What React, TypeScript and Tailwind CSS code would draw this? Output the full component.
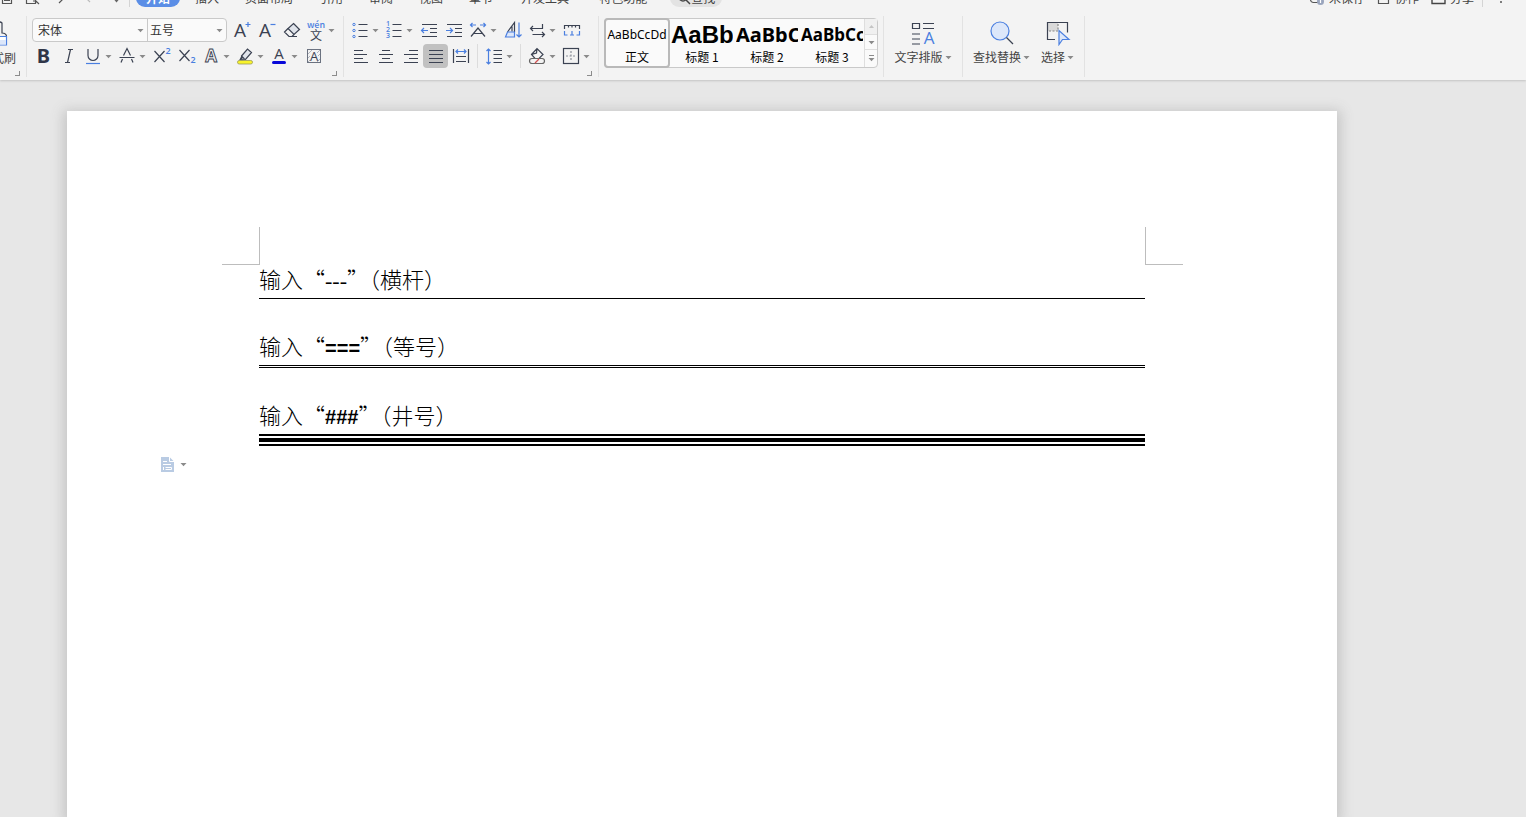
import type { ReactNode } from 'react';
import clsx from 'clsx';
import { Italic } from 'lucide-react';

const DARK = '#3b4252';
const BLUE = '#4a7fe0';

function Caret() {
  return (
    <svg viewBox="0 0 7 5" className="w-[7px] h-[5px] shrink-0 fill-[#8a8a8a]">
      <path d="M0.500 1h6L3.500 4.300z" />
    </svg>
  );
}

function Icon({ children }: { children: ReactNode }) {
  return (
    <svg
      viewBox="0 0 18 18"
      className="w-[18px] h-[18px] shrink-0 overflow-visible"
      fill="none"
      stroke={DARK}
      strokeWidth="1.2"
    >
      {children}
    </svg>
  );
}

// Letter used inside an icon
function Glyph({ x, y, size, color = DARK, bold = false, children }: {
  x: number;
  y: number;
  size: number;
  color?: string;
  bold?: boolean;
  children: string;
}) {
  return (
    <text
      x={x}
      y={y}
      fontSize={size}
      fill={color}
      stroke="none"
      textAnchor="middle"
      className={clsx("font-['Open_Sans',sans-serif]", bold ? 'font-semibold' : 'font-normal')}
    >
      {children}
    </text>
  );
}

function Tool({ label, menu = false, active = false, children }: {
  label: string;
  menu?: boolean;
  active?: boolean;
  children: ReactNode;
}) {
  return (
    <button
      type="button"
      aria-label={label}
      aria-pressed={active || undefined}
      className={clsx(
        'h-6 flex items-center shrink-0 rounded',
        menu ? 'w-[34px]' : 'w-[25px] justify-center',
        active && 'bg-[#c1c1c1]'
      )}
    >
      {menu ? (
        <>
          <span className="w-6 flex justify-center">{children}</span>
          <Caret />
        </>
      ) : (
        children
      )}
    </button>
  );
}

function Launcher({ label }: { label: string }) {
  return (
    <button type="button" aria-label={label} className="self-end mr-[6px] mt-px w-[5px] h-[5px] border-r border-b border-[#8c8c8c]" />
  );
}

function Group({ className, children }: { className?: string; children: ReactNode }) {
  return (
    <div className={clsx('h-[61px] pt-[2px] flex flex-col gap-[2px] shrink-0 border-r border-[#e2e2e2]', className)}>
      {children}
    </div>
  );
}

function Combo({ id, label, value, className }: { id: string; label: string; value: string; className: string }) {
  return (
    <div className={clsx('h-full flex items-center pr-[3px]', className)}>
      <select id={id} aria-label={label} className="appearance-none grow min-w-0 bg-transparent outline-none text-xs text-[#333]">
        <option>{value}</option>
      </select>
      <Caret />
    </div>
  );
}

function FontGroup() {
  return (
    <Group className="w-[317px]">
      <div className="flex items-center pl-[5px]">
        <div className="flex h-6 w-[195px] mr-[2px] rounded border border-[#c9c9c9] bg-[#fafafa]">
          <Combo id="font" label="字体" value="宋体" className="w-[115px] pl-[5px] border-r border-[#c9c9c9]" />
          <Combo id="size" label="字号" value="五号" className="grow pl-[2px]" />
        </div>
        <Tool label="增大字号">
          <Icon>
            <Glyph x={7} y={16} size={19}>A</Glyph>
            <path d="M15 1v5M12.500 3.500h5" stroke={BLUE} />
          </Icon>
        </Tool>
        <Tool label="减小字号">
          <Icon>
            <Glyph x={7} y={16} size={19}>A</Glyph>
            <path d="M12.500 3.500h5" stroke={BLUE} />
          </Icon>
        </Tool>
        <Tool label="清除格式">
          <Icon>
            <path d="M10.500 2.500l6 6-5.500 5-6-6z" fill="#dfe3ea" />
            <path d="M5 7.500L1.500 11l4.500 4.500h3l2-2M7 15.500h7" />
          </Icon>
        </Tool>
        <Tool label="拼音指南" menu>
          <span className="flex flex-col items-center">
            <span className="text-[9px] leading-[9px] text-[#4a7fe0] font-medium">wén</span>
            <span className="text-[12px] leading-[12px] text-[#3b4252]">文</span>
          </span>
        </Tool>
      </div>
      <div className="flex items-center pl-1">
        <Tool label="加粗">
          <span className="font-['Noto_Sans',sans-serif] font-bold text-[20px] leading-6 text-[#2f3648]">B</span>
        </Tool>
        <Tool label="倾斜">
          <Icon>
            <path d="M8 2.500h5M5 15.500h5M10.500 2.500l-3 13" />
          </Icon>
        </Tool>
        <Tool label="下划线" menu>
          <Icon>
            <path d="M4 2v6.500a5 5 0 0 0 10 0V2" />
            <path d="M2 16.500h14" stroke={BLUE} />
          </Icon>
        </Tool>
        <Tool label="删除线" menu>
          <Icon>
            <path d="M5.500 8.500L9 1.500l3.500 7M1.500 10.500h15M4.500 12L3 15.500M13.500 12l1.500 3.500" />
          </Icon>
        </Tool>
        <Tool label="上标">
          <Icon>
            <path d="M1.500 4l10 11M11.500 4l-10 11" />
            <Glyph x={15} y={7} size={9} color={BLUE} bold>2</Glyph>
          </Icon>
        </Tool>
        <Tool label="下标">
          <Icon>
            <path d="M1.500 3l10 11M11.500 3l-10 11" />
            <Glyph x={15} y={16} size={9} color={BLUE} bold>2</Glyph>
          </Icon>
        </Tool>
        <Tool label="文字效果" menu>
          <Icon>
            <text x="9" y="15" fontSize="17" textAnchor="middle" fill="#f3f3f3" stroke={DARK} strokeWidth="0.900" className="font-['Open_Sans',sans-serif] font-bold">A</text>
          </Icon>
        </Tool>
        <Tool label="突出显示" menu>
          <Icon>
            <path d="M5.500 9l6-7 4 3.500-6 7-3.500.5zM5.500 9L8.500 12M5.500 10L4 13h3" fill="#dfe3ea" />
            <rect x="1.500" y="13.500" width="15" height="3.500" rx="1.700" fill="#f8f32b" stroke="#9a9a55" strokeWidth="0.800" />
          </Icon>
        </Tool>
        <Tool label="字体颜色" menu>
          <Icon>
            <Glyph x={9} y={12} size={15}>A</Glyph>
            <rect x="2" y="14" width="14" height="3" rx="1.500" fill="#0808d8" stroke="none" />
          </Icon>
        </Tool>
        <Tool label="字符底纹">
          <Icon>
            <rect x="2.500" y="2.500" width="13" height="13" stroke="#6b7280" strokeWidth="1" />
            <path d="M3 7l4-4M3 11l2-2M12 6l3-3M13 9l2-2M3 15l2-2M12 15l3-3" stroke="#a0a5b0" strokeWidth="0.800" />
            <Glyph x={9} y={14} size={13}>A</Glyph>
          </Icon>
        </Tool>
      </div>
      <Launcher label="字体设置" />
    </Group>
  );
}

function ParagraphGroup() {
  return (
    <Group className="w-[255px]">
      <div className="flex items-center pl-1">
        <Tool label="项目符号" menu>
          <Icon>
            <path d="M7.500 3.500h9M7.500 9.500h9M7.500 15.500h9" />
            <g stroke={BLUE} strokeWidth="1">
              <circle cx="3" cy="3.500" r="1.200" />
              <circle cx="3" cy="9.500" r="1.200" />
              <circle cx="3" cy="15.500" r="1.200" />
            </g>
          </Icon>
        </Tool>
        <Tool label="编号" menu>
          <Icon>
            <path d="M7.500 3.500h9M7.500 9.500h9M7.500 15.500h9" />
            <Glyph x={3} y={5} size={7} color={BLUE} bold>1</Glyph>
            <Glyph x={3} y={11} size={7} color={BLUE} bold>2</Glyph>
            <Glyph x={3} y={17} size={7} color={BLUE} bold>3</Glyph>
          </Icon>
        </Tool>
        <Tool label="减少缩进量">
          <Icon>
            <path d="M2 3.500h15M10 7.500h7M10 11.500h7M2 15.500h15" />
            <path d="M8 9.500H1.500M4 7L1.500 9.500 4 12" stroke={BLUE} />
          </Icon>
        </Tool>
        <Tool label="增加缩进量">
          <Icon>
            <path d="M2 3.500h15M10 7.500h7M10 11.500h7M2 15.500h15" />
            <path d="M1 9.500h6.500M5 7l2.500 2.500L5 12" stroke={BLUE} />
          </Icon>
        </Tool>
        <Tool label="中文版式" menu>
          <Icon>
            <path d="M2 15.500L9 7l7 8.500M4.500 12.500h9" />
            <path d="M7 4H1.500M3.500 2l-2 2 2 2M11 4h5.500M14.500 2l2 2-2 2" stroke={BLUE} />
          </Icon>
        </Tool>
        <Tool label="排序">
          <Icon>
            <path d="M3.500 11L10.500 1.500V11M8 5.500v5" />
            <path d="M3.500 11h7v5h-9z" stroke={BLUE} fill="#dce7fa" />
            <path d="M15 1.500V16M12.500 13.500L15 16l2.500-2.500" stroke={BLUE} />
          </Icon>
        </Tool>
        <Tool label="显示段落标记" menu>
          <Icon>
            <path d="M14.500 3v4.500H2.500M5 5L2.500 7.500 5 10" />
            <path d="M4.500 13.500h12M14 11l2.500 2.500L14 16" />
          </Icon>
        </Tool>
        <Tool label="制表位">
          <Icon>
            <path d="M1.500 8V4.500h15V8M5.500 4.500v2M9 4.500v2M12.500 4.500v2" />
            <path d="M1.500 10v4h3M13.500 14h3v-4M9 10v4M7 14h4" stroke={BLUE} />
          </Icon>
        </Tool>
      </div>
      <div className="flex items-center pl-1">
        <Tool label="左对齐">
          <Icon><path d="M2 3.500h9M2 7.500h13M2 11.500h9M2 15.500h14" /></Icon>
        </Tool>
        <Tool label="居中对齐">
          <Icon><path d="M5 3.500h8M2 7.500h14M5 11.500h8M2 15.500h14" /></Icon>
        </Tool>
        <Tool label="右对齐">
          <Icon><path d="M7 3.500h9M2 7.500h14M7 11.500h9M2 15.500h14" /></Icon>
        </Tool>
        <Tool label="两端对齐" active>
          <Icon><path d="M2 3.500h14M2 7.500h14M2 11.500h14M2 15.500h14" /></Icon>
        </Tool>
        <Tool label="分散对齐">
          <Icon>
            <path d="M1.500 2v14M16.500 2v14M4 9.500h10M4 14.500h10" />
            <path d="M4 4.500h10M6 2.500l-2 2 2 2M12 2.500l2 2-2 2" stroke={BLUE} />
          </Icon>
        </Tool>
        <span className="w-px h-6 mx-1 bg-[#dcdcdc]" />
        <Tool label="行距" menu>
          <Icon>
            <path d="M8.500 3.500H17M8.500 7.500H17M8.500 11.500H17M8.500 15.500H17" />
            <path d="M3.500 2v15M1.500 4l2-2 2 2M1.500 15l2 2 2-2" stroke={BLUE} />
          </Icon>
        </Tool>
        <span className="w-px h-6 mx-1 bg-[#dcdcdc]" />
        <Tool label="底纹颜色" menu>
          <Icon>
            <path d="M3.500 7.500L9 1.500l6 6-4 4H7zM3.500 7.500L8.500 6l.5-4" fill="#f6f6f6" />
            <rect x="1.500" y="11.500" width="15" height="5" rx="2.500" fill="#f3f3f3" stroke="#666" />
            <path d="M7 16l4-4" stroke="#d05050" />
          </Icon>
        </Tool>
        <Tool label="边框" menu>
          <Icon>
            <rect x="1.500" y="1.500" width="15" height="15" />
            <path d="M9 4v10M4 9h10" strokeDasharray="2 1.500" stroke="#8a8f99" />
          </Icon>
        </Tool>
      </div>
      <Launcher label="段落设置" />
    </Group>
  );
}

const headings = [
  { name: '标题 1', sample: 'AaBb', font: "text-[24px] font-['Liberation_Sans',sans-serif]" },
  { name: '标题 2', sample: 'AaBbC', font: "text-[20px] font-['Noto_Sans',sans-serif]" },
  { name: '标题 3', sample: 'AaBbCc', font: "text-[17px] font-['Noto_Sans',sans-serif]" },
];

function StyleGallery() {
  return (
    <Group className="w-[285px] pl-[5px]">
      <div className="flex w-[274px] h-[50px] rounded border border-[#c9c9c9] bg-[#fafafa] text-xs text-black">
        <button type="button" className="w-[66px] -m-px rounded border-2 border-[#b9b9b9] flex flex-col items-center overflow-hidden">
          <span className="h-[29px] leading-[30px] font-['Noto_Sans',sans-serif]">AaBbCcDd</span>
          <span className="leading-4">正文</span>
        </button>
        {headings.map(({ name, sample, font }) => (
          <button key={name} type="button" className="w-[65px] pl-[2px] pr-px flex flex-col items-center">
            <span className={clsx('w-full h-[30px] leading-8 text-left font-bold overflow-hidden whitespace-nowrap', font)}>
              {sample}
            </span>
            <span className="leading-4">{name}</span>
          </button>
        ))}
        <div className="grow flex flex-col border-l border-[#dedede]">
          <button type="button" aria-label="上一行" className="grow flex items-center justify-center bg-[#f0f0f0]">
            <svg viewBox="0 0 7 5" className="w-[7px] h-[5px] fill-[#c4c4c4]"><path d="M1 4h5L3.500 1z" /></svg>
          </button>
          <button type="button" aria-label="下一行" className="grow flex items-center justify-center border-y border-[#dedede]">
            <Caret />
          </button>
          <button type="button" aria-label="更多样式" className="grow flex flex-col items-center justify-center gap-px">
            <span className="w-[5px] h-px bg-[#8a8a8a]" />
            <Caret />
          </button>
        </div>
      </div>
    </Group>
  );
}

function BigTool({ label, children }: { label: string; children: ReactNode }) {
  return (
    <button type="button" className="flex flex-col items-center pt-[2px] text-xs text-[#444]">
      <svg viewBox="0 0 26 26" className="w-[26px] h-[26px]" fill="none" stroke={DARK} strokeWidth="1.200">
        {children}
      </svg>
      <span className="flex items-center gap-[2px] leading-[22px]">
        {label}
        <Caret />
      </span>
    </button>
  );
}

const tabs = ['插入', '页面布局', '引用', '审阅', '视图', '章节'];
const extraTabs = ['开发工具', '特色功能'];

function TabBar() {
  return (
    <nav className="h-[7px] flex items-end overflow-hidden text-xs text-[#444]">
      <div className="w-[130px] h-[18px] shrink-0 border-r border-[#d4d4d4]">
        <svg viewBox="0 0 129 18" className="w-[129px] h-[18px]" fill="none" stroke="#555" strokeWidth="1.200">
          <path d="M2.500 4v10.500h9V4M4 11.500h6M26.500 4v10.500h9V4M33 12h3l3 3M59 14l5-5" />
          <path d="M90 13l-5-5" stroke="#bbb" />
          <path d="M114 10.500h5l-2.500 3z" fill="#666" stroke="none" />
        </svg>
      </div>
      <button type="button" className="ml-[6px] mr-[2px] h-[18px] px-[10px] shrink-0 rounded-b-[9px] bg-[#5b8ee6] font-bold text-white leading-[18px]">
        开始
      </button>
      {tabs.map(tab => (
        <button key={tab} type="button" className="h-[18px] px-[13px] shrink-0 leading-[18px]">
          {tab}
        </button>
      ))}
      {extraTabs.map(tab => (
        <button key={tab} type="button" className="h-[18px] px-[15px] shrink-0 leading-[18px]">
          {tab}
        </button>
      ))}
      <button type="button" className="ml-2 h-[18px] w-[52px] shrink-0 flex items-center justify-center rounded-b-[9px] bg-[#e3e3e3]">
        <svg viewBox="0 0 14 18" className="w-[14px] h-[18px]" fill="none" stroke="#444" strokeWidth="1.500">
          <circle cx="6" cy="8" r="4" />
          <path d="M9 11l4 4" />
        </svg>
        <span className="leading-[18px]">查找</span>
      </button>
      <div className="ml-auto flex h-[18px] shrink-0 items-center leading-[18px]">
        <button type="button" className="flex items-center gap-1 mr-3">
          <svg viewBox="0 0 16 18" className="w-4 h-[18px]" fill="none" stroke="#555" strokeWidth="1.200">
            <path d="M9 13.500H4.500a3 3 0 0 1 0-6" />
            <circle cx="11.500" cy="12.500" r="3.500" fill="#9aa5bd" stroke="none" />
            <path d="M11.500 10.500v3.500" stroke="#fff" />
          </svg>
          未保存
        </button>
        <button type="button" className="flex items-center gap-1 mr-3">
          <svg viewBox="0 0 14 18" className="w-[14px] h-[18px]" fill="none" stroke="#555" strokeWidth="1.200">
            <path d="M1.500 9v5.500h10V11" />
            <circle cx="7" cy="6" r="3" />
          </svg>
          协作
        </button>
        <button type="button" className="flex items-center gap-1">
          <svg viewBox="0 0 15 18" className="w-[15px] h-[18px]" fill="none" stroke="#444" strokeWidth="1.400">
            <path d="M1 6v8.500h13V8M5 10l5-5" />
          </svg>
          分享
        </button>
        <span className="w-px h-full ml-2 mr-4 bg-[#d4d4d4]" />
        <button type="button" aria-label="更多" className="w-[27px] h-full">
          <svg viewBox="0 0 4 18" className="w-1 h-[18px]" fill="#555">
            <circle cx="2" cy="9" r="1" />
            <circle cx="2" cy="13" r="1" />
          </svg>
        </button>
      </div>
    </nav>
  );
}

function Ribbon() {
  return (
    <header className="relative bg-[#f3f3f3] shadow-[0_1px_2px_#c4c4c4]">
      <TabBar />
      <div className="flex pt-[9px] pb-[3px] overflow-hidden">
        <Group className="w-[27px]">
          <button type="button" className="h-[50px] w-[16px] flex flex-col items-end text-xs text-[#444]">
            <svg viewBox="0 0 26 30" className="w-[26px] h-[30px] shrink-0" fill="none" stroke={DARK} strokeWidth="1.200">
              <path d="M5 18v-2q0-1 3-1V5q2-2 4 0v10q4 0 4.500 3" />
              <path d="M4 18.500h12.500v8.500H4z" fill="#fff" stroke={BLUE} />
              <path d="M5 22h11v4.500H5z" fill="#dce7fa" stroke="none" />
            </svg>
            <span className="whitespace-nowrap leading-5">格式刷</span>
          </button>
          <Launcher label="剪贴板设置" />
        </Group>
        <FontGroup />
        <ParagraphGroup />
        <StyleGallery />
        <Group className="w-[79px]">
          <BigTool label="文字排版">
            <path d="M2.500 3.500h7v5h-7zM13 3.500h11M13 8.500h11M2 14h8M2 19h8M2 24h8" />
            <text x="19" y="24" fontSize="17" textAnchor="middle" fill={BLUE} stroke="none" className="font-['Open_Sans',sans-serif]">A</text>
          </BigTool>
        </Group>
        <Group className="w-[122px]">
          <div className="flex pl-[10px] gap-[11px]">
            <BigTool label="查找替换">
              <circle cx="11" cy="11" r="9" fill="#dce7fa" stroke={BLUE} />
              <path d="M17.500 17.500L24 24" />
            </BigTool>
            <BigTool label="选择">
              <path d="M3 3h10v8H3z" fill="#d9d9d9" stroke="none" />
              <path d="M10 19.500H2.500v-17h20v10" />
              <path d="M13 4v7H4" stroke="#888" strokeDasharray="2 1.500" />
              <path d="M14 10.500v14l3.500-5h6.500z" fill="#dce7fa" stroke={BLUE} />
            </BigTool>
          </div>
        </Group>
      </div>
    </header>
  );
}

function Paragraph({ mark, markFont, name, children }: {
  mark: string;
  markFont: string;
  name: string;
  children: ReactNode;
}) {
  return (
    <section>
      <p className="h-[33px] text-[22px] leading-[26px] font-light whitespace-nowrap">
        输入“<span className={markFont}>{mark}</span>”（{name}）
      </p>
      {children}
    </section>
  );
}

const boldMark = "font-['Liberation_Sans',sans-serif] text-[20px] font-bold";

export default function App() {
  return (
    <div className="min-h-screen flex flex-col bg-[#e7e7e7] font-['Noto_Sans_CJK_SC',sans-serif] overflow-hidden">
      <Ribbon />
      <main className="grow flex mt-[31px] ml-[67px] mr-[189px]">
        <article lang="zh-CN" className="grow bg-white pt-[116px] text-black shadow-[0_3px_12px_4px_#c6c6c6]">
          <div className="flex justify-between pl-[155px] pr-[154px]">
            <span className="w-[38px] h-[38px] border-r border-b border-[#bdbdbd]" />
            <span className="w-[38px] h-[38px] border-l border-b border-[#bdbdbd]" />
          </div>
          <div className="px-[192px] flex flex-col gap-[33px]">
            <Paragraph mark="---" markFont="font-['Liberation_Serif',serif] font-normal" name="横杆">
              <hr className="border-0 h-px bg-black" />
            </Paragraph>
            <Paragraph mark="===" markFont={boldMark} name="等号">
              <hr className="h-[3px] border-0 border-y border-black" />
            </Paragraph>
            <Paragraph mark="###" markFont={boldMark} name="井号">
              <hr className="h-3 border-0 border-y-2 border-black py-[2px] bg-black bg-clip-content" />
            </Paragraph>
          </div>
          <button type="button" aria-label="粘贴选项" className="ml-[94px] mt-[11px] flex items-center gap-[5px]">
            <svg viewBox="0 0 14 15" className="w-[14px] h-[15px]" fill="none" stroke="#fff">
              <path d="M0 0h8.500l4.500 4.500V15H0z" fill="#b9cbe3" stroke="none" />
              <path d="M8.500 0v4.500H13M2 4.500h4M2 7.500h8M4.500 10.500h6v2h-6M2.500 10v3" />
            </svg>
            <Caret />
          </button>
        </article>
      </main>
    </div>
  );
}
